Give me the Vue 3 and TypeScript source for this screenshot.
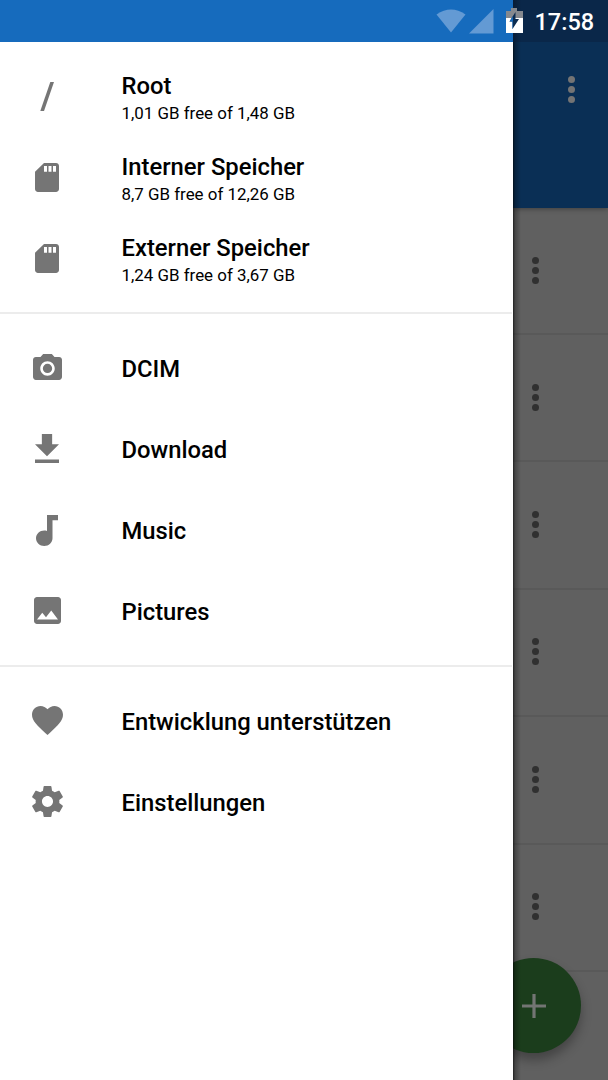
<script setup lang="ts">
interface Entry {
  title: string
  detail?: string
  viewBox: string
  width: number
  height: number
  shift: number
  path: string
}

const sdCard =
  'M18 2h-8L4.020 8 4 20c0 1.100.9 2 2 2h12c1.100 0 2-.9 2-2V4c0-1.100-.9-2-2-2zm-6 6h-2V4h2v4zm3 0h-2V4h2v4zm3 0h-2V4h2v4z'

const sections: Entry[][] = [
  [
    { title: 'Root', detail: '1,01 GB free of 1,48 GB', viewBox: '0 0 14 29', width: 14, height: 29, shift: 0, path: 'M10.300 0H14L4 29H.3z' },
    { title: 'Interner Speicher', detail: '8,7 GB free of 12,26 GB', viewBox: '4 2 16 20', width: 24, height: 29, shift: 0, path: sdCard },
    { title: 'Externer Speicher', detail: '1,24 GB free of 3,67 GB', viewBox: '4 2 16 20', width: 24, height: 29, shift: 0, path: sdCard },
  ],
  [
    {
      title: 'DCIM', viewBox: '2 2 20 18', width: 29, height: 26, shift: -2,
      path: 'M12 8.800a3.200 3.200 0 1 0 0 6.400a3.200 3.200 0 1 0 0-6.400zM9 2L7.170 4H4c-1.100 0-2 .9-2 2v12c0 1.100.9 2 2 2h16c1.100 0 2-.9 2-2V6c0-1.100-.9-2-2-2h-3.170L15 2H9zm3 15c-2.760 0-5-2.240-5-5s2.240-5 5-5 5 2.240 5 5-2.240 5-5 5z',
    },
    { title: 'Download', viewBox: '5 3 14 17', width: 24, height: 29, shift: -1, path: 'M19 9h-4V3H9v6H5l7 7 7-7zM5 18v2h14v-2H5z' },
    {
      title: 'Music', viewBox: '6 3 12 18', width: 22, height: 31, shift: -0.5,
      path: 'M12 3v9.260c-.5-.17-1-.26-1.500-.26C8 12 6 14 6 16.500S8 21 10.500 21s4.500-2 4.500-4.500V6h3V3h-6z',
    },
    {
      title: 'Pictures', viewBox: '3 3 18 18', width: 27, height: 27, shift: -1,
      path: 'M21 19V5c0-1.100-.9-2-2-2H5c-1.100 0-2 .9-2 2v14c0 1.100.9 2 2 2h14c1.100 0 2-.9 2-2zM8.500 13.500l2.500 3.010L14.500 12l4.500 6H5l3.500-4.500z',
    },
  ],
  [
    {
      title: 'Entwicklung unterstützen', viewBox: '2 3 20 18.350', width: 31, height: 29, shift: -1,
      path: 'M12 21.350l-1.450-1.320C5.400 15.360 2 12.280 2 8.500 2 5.420 4.420 3 7.500 3c1.740 0 3.410.81 4.500 2.090C13.090 3.810 14.760 3 16.500 3 19.580 3 22 5.420 22 8.500c0 3.780-3.400 6.860-8.550 11.540L12 21.350z',
    },
    {
      title: 'Einstellungen', viewBox: '2.200 2 19.600 20', width: 31, height: 31, shift: -1,
      path: 'M19.430 12.980c.04-.32.07-.64.07-.98s-.03-.66-.07-.98l2.110-1.650c.19-.15.24-.42.12-.64l-2-3.460c-.12-.22-.39-.3-.61-.22l-2.490 1c-.52-.4-1.080-.73-1.690-.98l-.38-2.650C14.460 2.180 14.250 2 14 2h-4c-.25 0-.46.18-.49.42l-.38 2.650c-.61.25-1.170.59-1.690.98l-2.490-1c-.23-.09-.49 0-.61.22l-2 3.460c-.13.22-.07.49.12.64l2.110 1.650c-.04.32-.07.65-.07.98s.03.66.07.98l-2.110 1.650c-.19.15-.24.42-.12.64l2 3.460c.12.22.39.3.61.22l2.490-1c.52.4 1.080.73 1.690.98l.38 2.650c.03.24.24.42.49.42h4c.25 0 .46-.18.49-.42l.38-2.650c.61-.25 1.170-.59 1.690-.98l2.490 1c.23.09.49 0 .61-.22l2-3.460c.12-.22.07-.49-.12-.64l-2.110-1.650zM12 15.500c-1.930 0-3.500-1.570-3.500-3.500s1.570-3.500 3.500-3.500 3.500 1.570 3.500 3.500-1.570 3.500-3.500 3.500z',
    },
  ],
]

const fileRows = 6
</script>

<template>
  <div class="screen">
    <nav class="drawer">
      <ul v-for="(section, s) in sections" :key="s" class="section">
        <li v-for="entry in section" :key="entry.title" class="entry">
          <span class="icon" :style="{ marginTop: entry.shift * 2 + 'px' }">
            <svg :viewBox="entry.viewBox" :width="entry.width" :height="entry.height" preserveAspectRatio="none">
              <path :d="entry.path" fill="#757575" />
            </svg>
          </span>
          <span class="label">
            <span class="title">{{ entry.title }}</span>
            <span v-if="entry.detail" class="detail">{{ entry.detail }}</span>
          </span>
        </li>
      </ul>
    </nav>

    <main class="content">
      <header class="toolbar">
        <span class="dots light"><i /><i /><i /></span>
      </header>
      <div v-for="n in fileRows" :key="n" class="file">
        <span class="dots"><i /><i /><i /></span>
      </div>
      <button class="fab" aria-label="Add">
        <svg width="24" height="24" viewBox="0 0 24 24"><path d="M10.400 0h3.200v10.400H24v3.200H13.600V24h-3.200V13.600H0v-3.200h10.400z" fill="#737573" /></svg>
      </button>
      <div class="edge" />
    </main>

    <div class="status">
      <svg class="wifi" width="30" height="24" viewBox="0 0 30 24"><path d="M.5 5.500Q15-4.500 29.500 5.500L15 23.500z" fill="#639ad4" /></svg>
      <svg class="signal" width="25" height="25" viewBox="0 0 25 25"><path d="M24.500 0v24.500H0z" fill="#639ad4" /></svg>
      <svg class="battery" width="17" height="25" viewBox="0 0 17 25">
        <path d="M0 3h5V0h6v3h6v8H0z" fill="#85898f" />
        <path d="M0 10h17v15H0z" fill="#fff" />
        <path d="M9.500 4v7H13L6.500 21v-7.500H3.500z" fill="#0c2c50" />
        <path d="M7 8.200V20.200L6.500 21v-7.500H3.500z" fill="#166bbd" />
      </svg>
      <span class="clock">17:58</span>
    </div>
  </div>
</template>

<style>
body {
  margin: 0;
}
</style>

<style scoped>
.screen {
  position: relative;
  display: flex;
  width: 608px;
  height: 1080px;
  overflow: hidden;
  background: #606060;
  color: #000;
  font-family: Roboto, "Liberation Sans", sans-serif;
}
.drawer {
  box-sizing: border-box;
  width: 513px;
  padding-top: 42px;
  background: #fff;
}
.section {
  margin: 0 1px 0 0;
  padding: 14px 0 13px;
  list-style: none;
}
.section + .section {
  border-top: 2px solid #ececec;
  padding-bottom: 13px;
}
.section:last-child {
  padding-top: 14px;
}
.entry {
  display: flex;
  align-items: center;
  height: 81px;
}
.icon {
  display: flex;
  justify-content: center;
  width: 94px;
  margin-right: 27.5px;
}
.label {
  display: flex;
  flex-direction: column;
}
.title {
  font-size: 23.800px;
  font-weight: 500;
  line-height: 28px;
}
.detail {
  font-size: 16.900px;
  line-height: 20px;
  margin-top: 3px;
  margin-bottom: -1px;
}
.content {
  position: relative;
  width: 95px;
  overflow: hidden;
}
.toolbar {
  box-sizing: border-box;
  height: 208px;
  padding: 76px 0 0 54.5px;
  background: #0a2f55;
  box-shadow: 0 1px 5px rgba(0, 0, 0, 0.35);
}
.file {
  box-sizing: border-box;
  height: 127.400px;
  padding: 48.5px 0 0 18.5px;
  border-bottom: 2px solid #595959;
}
.file:nth-child(2) {
  height: 127px;
}
.dots {
  display: flex;
  flex-direction: column;
  gap: 3px;
  width: 7px;
}
.dots i {
  width: 7px;
  height: 7px;
  border-radius: 50%;
  background: #303030;
}
.dots.light i {
  background: #747474;
}
.fab {
  position: absolute;
  left: -27px;
  top: 958px;
  display: grid;
  place-items: center;
  width: 95px;
  height: 95px;
  padding: 0;
  border: 0;
  border-radius: 50%;
  background: #1b3d1c;
  box-shadow: 0 7px 11px rgba(0, 0, 0, 0.3);
}
.edge {
  position: absolute;
  inset: 0 auto 0 0;
  width: 8px;
  background: linear-gradient(90deg, rgba(0, 0, 0, 0.65), rgba(0, 0, 0, 0.28) 25%, transparent);
}
.status {
  position: absolute;
  inset: 0 0 auto 0;
  display: flex;
  box-sizing: border-box;
  height: 42px;
  padding-left: 436px;
  background: linear-gradient(90deg, #166bbd 513px, #081c34 513px, #0a2749 521px);
}
.wifi {
  margin-top: 9px;
}
.signal {
  margin: 9px 0 0 3px;
}
.battery {
  margin: 8px 0 0 12px;
}
.clock {
  margin: 8px 0 0 11.5px;
  color: #fff;
  font-size: 23.500px;
  font-weight: 500;
  line-height: 28px;
}
</style>
